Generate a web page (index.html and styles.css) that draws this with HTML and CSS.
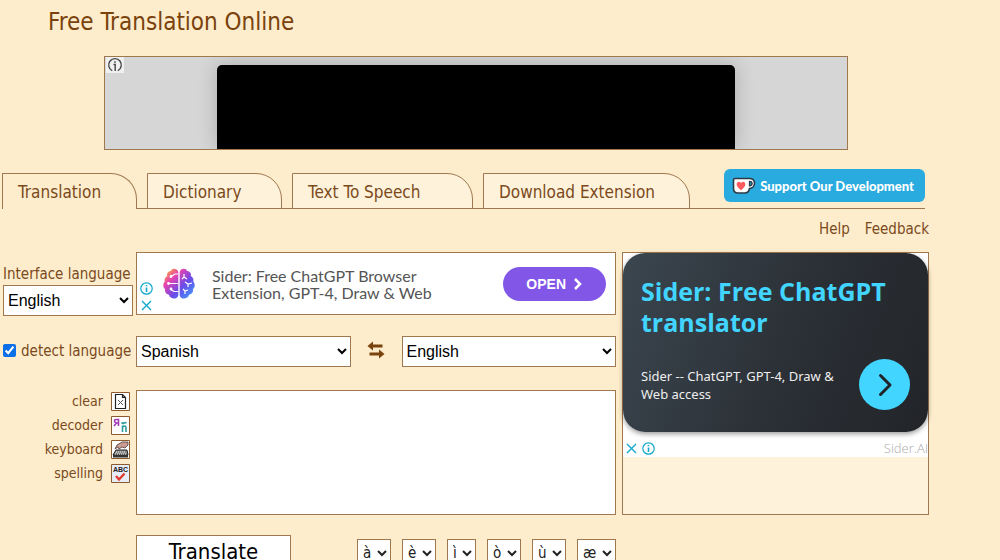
FILE: index.html
```html
<!DOCTYPE html>
<html lang="en">
<head>
<meta charset="utf-8">
<title>Free Translation Online</title>
<link rel="stylesheet" href="styles.css">
</head>
<body>
<div class="page">
  <h1 class="title">Free Translation Online</h1>

  <div class="banner">
    <span class="banner-info">
      <svg width="16" height="16" viewBox="0 0 16 16" fill="none" stroke="#444" stroke-width="1.400"><path d="M5.200 13.600A6.300 6.300 0 1 1 10.800 13.600M6.500 7.500h1.700V14"/><circle cx="8" cy="5" r=".5" fill="#444" stroke-width=".8"/></svg>
    </span>
    <div class="banner-video"></div>
  </div>

  <div class="topbar">
    <nav class="tabs">
      <a class="tab tab-active" href="#">Translation</a>
      <a class="tab" href="#">Dictionary</a>
      <a class="tab" href="#">Text To Speech</a>
      <a class="tab" href="#">Download Extension</a>
    </nav>
    <a class="support" href="#">
      <svg width="24" height="18" viewBox="0 0 24 18"><path d="M3 1.500h14.500c3 0 5 2 5 4.800s-2.300 5-5 5.200c-.5 2.800-1.800 4.500-4.500 4.500H6c-3 0-4.500-1.600-4.500-4.500V3Q1.500 1.500 3 1.500z" fill="#fff" stroke="#2d3a45" stroke-width="1.600"/><path d="M17.500 4.300v4.600c1.500 0 2.600-1 2.600-2.400s-1.100-2.200-2.600-2.200z" fill="#29abe0" stroke="#2d3a45" stroke-width="1.300"/><path d="M9 13.200C6 10.600 4.600 9.200 4.600 7.300c0-2.600 3-3.300 4.400-1.200 1.400-2.100 4.400-1.400 4.400 1.200 0 1.900-1.400 3.300-4.400 5.900z" fill="#ff5a5f"/></svg>
      <span>Support Our Development</span>
    </a>
  </div>

  <div class="links">
    <a href="#">Help</a>
    <a href="#">Feedback</a>
  </div>

  <main class="workspace">
    <div class="interface">
      <label for="ui-lang">Interface language</label>
      <select id="ui-lang" class="select"><option>English</option></select>
    </div>

    <section class="ad-wide">
      <div class="ad-marks">
        <svg width="13" height="13" viewBox="0 0 13 13" fill="none" stroke="#10a8cc" stroke-width="1.200"><circle cx="6.500" cy="6.500" r="5.700"/><path d="M6.500 5.500v4.500M6.500 3v1.300" stroke-width="1.600"/></svg>
        <svg width="13" height="13" viewBox="0 0 13 13" stroke="#10a8cc" stroke-width="1.400"><path d="M2 2l9 9M11 2l-9 9"/></svg>
      </div>
      <svg width="32" height="32" viewBox="0 0 32 32">
        <defs><linearGradient id="brain-fill" x1="0" y1="0" x2="1" y2="1"><stop offset=".05" stop-color="#ffb02e"/><stop offset=".3" stop-color="#e843b0"/><stop offset=".6" stop-color="#6b4be8"/><stop offset="1" stop-color="#38a8ff"/></linearGradient></defs>
        <path fill="url(#brain-fill)" d="M15.300 4C14.500 0 8.500 0 8 3 5 3 3.500 5.500 4.200 8 1.500 9.500 1.200 12 1.800 13.500-.3 15.500-.2 19.500 2 21c-.5 3.500 1.500 5.500 4 5.800 1 4.700 8.500 5.200 9.300 .700zM16.700 4c.8-4 6.800-4 7.300-1 3 0 4.500 2.500 3.800 5 2.700 1.500 3 4 2.400 5.500 2.100 2 2 6-.2 7.500.5 3.500-1.500 5.500-4 5.800-1 4.700-8.500 5.200-9.300 .700z"/>
        <g fill="none" stroke="#fff" stroke-width="1.200"><path d="M15 6h-3L9 8M6 15.500h9M15 23.500h-4l-3-2M21 6v3l-2 2M21 9l3 2M22 14l3 2 4-1M25 16v3M20 21l2 2 3-1M22 23v3"/><circle cx="8" cy="8.500" r=".8" fill="#fff"/><circle cx="5.500" cy="15.500" r=".8" fill="#fff"/><circle cx="8" cy="21" r=".8" fill="#fff"/></g>
      </svg>
      <p class="ad-wide-text">Sider: Free ChatGPT Browser<br>Extension, GPT-4, Draw &amp; Web</p>
      <button class="open" type="button">OPEN
        <svg width="10" height="14" viewBox="0 0 10 14" fill="none" stroke="#fff" stroke-width="2.500"><path d="M2 2l5 5-5 5"/></svg>
      </button>
    </section>

    <aside class="side">
      <div class="side-ad">
        <div class="card">
          <h2 class="card-title">Sider: Free ChatGPT translator</h2>
          <div class="card-foot">
            <p class="card-text">Sider -- ChatGPT, GPT-4, Draw &amp; Web access</p>
            <button class="go" type="button" aria-label="Open">
              <svg width="20" height="28" viewBox="0 0 20 28" fill="none" stroke="#202429" stroke-width="3" stroke-linecap="round" stroke-linejoin="round"><path d="M5.500 4.500L15 14l-9.500 9.500"/></svg>
            </button>
          </div>
        </div>
        <div class="side-foot">
          <svg width="13" height="13" viewBox="0 0 13 13" stroke="#10a8cc" stroke-width="1.400"><path d="M2 2l9 9M11 2l-9 9"/></svg>
          <svg width="13" height="13" viewBox="0 0 13 13" fill="none" stroke="#10a8cc" stroke-width="1.200"><circle cx="6.500" cy="6.500" r="5.700"/><path d="M6.500 5.500v4.500M6.500 3v1.300" stroke-width="1.600"/></svg>
          <span class="brand">Sider.AI</span>
        </div>
      </div>
    </aside>

    <div class="detect">
      <input id="detect" class="check" type="checkbox" checked>
      <label for="detect">detect language</label>
    </div>

    <div class="languages">
      <select class="select" aria-label="From"><option>Spanish</option></select>
      <button class="swap" type="button" aria-label="Swap languages">
        <svg width="18" height="18" viewBox="0 0 18 18" fill="#7a420c"><path d="M.5 5L6 .5v3h9.500v3H6v3zM17.500 13L12 8.500v3H2.500v3H12v3z"/></svg>
      </button>
      <select class="select" aria-label="To"><option>English</option></select>
    </div>

    <div class="tools">
      <button class="tool" type="button">clear
        <svg width="19" height="19" viewBox="0 0 19 19"><path d="M.5.5h18v18H.5z" fill="#fff" stroke="#8a5a30"/><path d="M4.500 2.500h7l3 3v11h-10zM11.500 2.500v3h3" fill="none" stroke="#222" stroke-width="1.200"/><path d="M7 8l5 5M12 8l-5 5" stroke="#555"/></svg>
      </button>
      <button class="tool" type="button">decoder
        <svg width="19" height="19" viewBox="0 0 19 19"><path d="M.5.5h18v18H.5z" fill="#fff" stroke="#8a5a30"/><path d="M7.500 10V3.500H5.500Q3.500 3.500 3.500 5t2 2h2M5.500 7L3 10" fill="none" stroke="#a33bb5" stroke-width="1.600"/><path d="M11.500 16V9.500M11.500 11q3.500-2.500 3.500 1v4M10.500 6.500l1.500 1 2-1 1.500.5" fill="none" stroke="#299b9b" stroke-width="1.600"/></svg>
      </button>
      <button class="tool" type="button">keyboard
        <svg width="19" height="19" viewBox="0 0 19 19"><path d="M.5.5h18v18H.5z" fill="#fff" stroke="#8a5a30"/><path d="M5 10h11l1 5H2z" fill="#888" stroke="#222"/><path d="M2 15h15v2.500H2z" fill="#333"/><path d="M5 12h10M4 14h11" stroke="#eee" stroke-dasharray="1 1"/><path d="M17 2h-6L6 5 4 9l3-2 1 2 3-2 3 1 3-3z" fill="#c99b92" stroke="#4b3935" stroke-width=".8"/></svg>
      </button>
      <button class="tool" type="button">spelling
        <svg width="19" height="19" viewBox="0 0 19 19"><path d="M.5.5h18v18H.5z" fill="#e8ecf8" stroke="#8a5a30"/><text class="abc" x="9.500" y="7.500" text-anchor="middle">ABC</text><path d="M5 12l3 3.500L13.500 9.500" fill="none" stroke="#e03a30" stroke-width="2.300"/></svg>
      </button>
    </div>

    <textarea class="source" aria-label="Text to translate"></textarea>

    <div class="actions">
      <button class="translate" type="button">Translate</button>
      <div class="chars">
        <select class="char" aria-label="a accents"><option>à</option></select>
        <select class="char" aria-label="e accents"><option>è</option></select>
        <select class="char" aria-label="i accents"><option>ì</option></select>
        <select class="char" aria-label="o accents"><option>ò</option></select>
        <select class="char" aria-label="u accents"><option>ù</option></select>
        <select class="char" aria-label="ligatures"><option>æ</option></select>
      </div>
    </div>
  </main>
</div>
</body>
</html>
```
FILE: styles.css
```css
* { box-sizing: border-box; }
body {
  margin: 0;
  background: #fdedcc;
  color: #7a4a1c;
  font: 15px/20px "DejaVu Sans Condensed", "Noto Sans", sans-serif;
}
h1, h2, p { margin: 0; }
a { color: inherit; text-decoration: none; }
button { font: inherit; color: inherit; border: 0; padding: 0; background: none; cursor: pointer; }
svg { flex: none; display: block; }
.page { max-width: 929px; }
.title {
  padding: 7px 0 19px 48px;
  font-size: 24px;
  line-height: 30px;
  font-weight: 400;
  color: #7a420c;
}

.banner {
  position: relative;
  margin: 0 81px 0 104px;
  height: 94px;
  padding: 8px 112px 0;
  border: 1px solid #a07850;
  background: #d6d6d6;
  overflow: hidden;
}
.banner-info { position: absolute; left: 1px; top: 0; padding: 0 1px; background: #f0f0f0; }
.banner-video { height: 100%; background: #000; border-radius: 5px 5px 0 0; box-shadow: 0 0 20px rgba(0, 0, 0, .2); }

.topbar {
  display: flex;
  justify-content: space-between;
  align-items: flex-start;
  margin: 19px 4px 0 2px;
  background: linear-gradient(#a07850, #a07850) bottom / 100% 1px no-repeat;
}
.tabs {
  display: grid;
  grid-template-columns: 135px 135px 181px 207px;
  gap: 10px;
  padding-top: 4px;
}
.tab {
  padding: 7px 0 4px 15px;
  border: 1px solid #a07850;
  border-radius: 0 26px 0 0;
  background: #fff2da;
  font-size: 17px;
  line-height: 23px;
  white-space: nowrap;
}
.tab-active { padding-bottom: 5px; background: #fdedcc; border-bottom: 0; }
.support {
  display: flex;
  align-items: center;
  gap: 4px;
  height: 33px;
  padding: 0 11px 0 8px;
  border-radius: 6px;
  background: #29abe0;
  color: #fff;
  font: 900 13px/20px Lato, sans-serif;
  white-space: nowrap;
}

.links { display: flex; justify-content: flex-end; gap: 15px; padding: 10px 0 13px; }

.workspace {
  display: grid;
  grid-template-columns: 136px minmax(0, 1fr) 313px;
  row-gap: 20px;
}
.interface { display: flex; flex-direction: column; gap: 1px; padding: 12px 3px 0 3px; white-space: nowrap; }
.select {
  width: 100%;
  min-width: 0;
  height: 31px;
  border: 1px solid #a07850;
  border-radius: 0;
  background: #fff;
  color: #000;
  font: 16px "Liberation Sans", sans-serif;
}

.ad-wide {
  display: flex;
  align-items: center;
  height: 63px;
  padding-right: 9px;
  border: 1px solid #a07850;
  background: #fff;
}
.ad-marks { align-self: flex-end; display: grid; gap: 4px; padding: 0 10px 2px 3px; }
.ad-wide-text { flex: 1; padding-left: 17px; color: #555; font: 16px/17px Lato, sans-serif; }
.open {
  display: flex;
  align-items: center;
  gap: 7px;
  padding: 7px 23px;
  border-radius: 17px;
  background: #8257e8;
  color: #fff;
  font: 700 14px/20px "Liberation Sans", sans-serif;
}

.side { grid-column: 3; grid-row: 1 / span 3; margin-left: 6px; border: 1px solid #a07850; background: #fff2da; }
.side-ad { background: #fff; }
.card {
  padding: 23px 18px 22px;
  border-radius: 22px;
  background: linear-gradient(110deg, #3b464f, #2b3036 55%, #222428);
  box-shadow: 0 2px 5px rgba(0, 0, 0, .4);
}
.card-title { color: #41d5ff; font: 700 25px/31px "Open Sans", "Noto Sans", sans-serif; }
.card-foot { display: flex; align-items: center; justify-content: space-between; padding-top: 21px; }
.card-text { max-width: 205px; color: #eee; font: 13px/18px "Noto Sans", "Open Sans", sans-serif; }
.go { display: grid; place-items: center; width: 51px; height: 51px; border-radius: 50%; background: #41d5ff; }
.side-foot { display: flex; align-items: center; gap: 4px; padding: 7px 0 0 2px; }
.brand { margin-left: auto; color: #aaa; font: 300 13px/18px "Open Sans", sans-serif; }

.detect { display: flex; align-items: center; gap: 5px; padding: 0 6px 5px 3px; white-space: nowrap; }
.check { margin: 0; width: 13px; height: 13px; accent-color: #0b6fe8; }
.languages { display: grid; grid-template-columns: 1fr 51px 1fr; align-items: start; padding-bottom: 3px; }
.swap { display: grid; place-items: center; padding-top: 5px; }

.tools { display: flex; flex-direction: column; gap: 5px; padding: 2px 6px 0 0; align-items: flex-end; }
.tool { display: flex; align-items: center; gap: 8px; font-size: 14px; line-height: 19px; }
.abc { font: 700 7px "Liberation Sans", sans-serif; fill: #222; }
.source { display: block; width: 100%; height: 125px; margin: 0; resize: none; border: 1px solid #a07850; background: #fff; font: 16px "Liberation Sans", sans-serif; }

.actions { grid-column: 2; display: flex; justify-content: space-between; align-items: flex-start; }
.translate {
  width: 155px;
  border: 1px solid #a07850;
  background: #fff;
  color: #000;
  font-size: 22px;
  line-height: 32px;
}
.chars { display: flex; gap: 11px; padding-top: 4px; }
.char {
  height: 28px;
  padding: 0 2px 0 1px;
  border: 1px solid #a07850;
  border-radius: 0;
  background: #fff;
  color: #222;
  font: 15px "DejaVu Sans Condensed", sans-serif;
}
```
